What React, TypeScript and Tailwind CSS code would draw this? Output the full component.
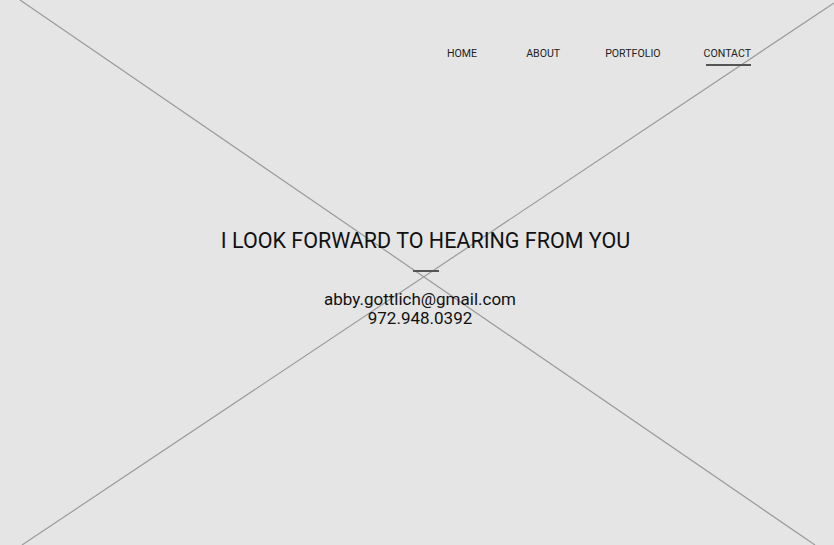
import React from "react";

const links = [
  { label: "HOME", gap: "" },
  { label: "ABOUT", gap: "ml-[49px]" },
  { label: "PORTFOLIO", gap: "ml-[45px]" },
  { label: "CONTACT", gap: "ml-[43px]", active: true },
];

function Backdrop() {
  return (
    <svg
      className="absolute inset-0 h-full w-full"
      viewBox="0 0 834 545"
      preserveAspectRatio="none"
    >
      <line x1="20" y1="0" x2="815" y2="545" stroke="#9a9a9a" strokeWidth="1.2" />
      <line x1="22" y1="545" x2="834" y2="3" stroke="#9a9a9a" strokeWidth="1.2" />
    </svg>
  );
}

export default function App() {
  return (
    <div
      className="relative h-[545px] w-[834px] overflow-hidden bg-[#e5e5e5] text-[#1a1a1a]"
      style={{ fontFamily: "Roboto, 'Liberation Sans', sans-serif" }}
    >
      <Backdrop />

      <nav className="relative flex justify-end pr-[83px] pt-[47px]">
        {links.map((l) => (
          <a
            key={l.label}
            className={`${l.gap} flex flex-col items-center text-[10.6px] leading-[14px] text-[#222]`}
          >
            {l.label}
            <span
              className={`mt-[3px] h-[2px] w-[calc(100%-2px)] self-end ${l.active ? "bg-[#555]" : "bg-transparent"}`}
            />
          </a>
        ))}
      </nav>

      <main className="relative mt-[162px] flex flex-col items-center">
        <h1 className="ml-[17px] text-[21.5px] leading-[25px] text-[#111]">
          I LOOK FORWARD TO HEARING FROM YOU
        </h1>
        <span className="ml-[17px] mt-[17px] h-[2px] w-[26px] bg-[#555]" />
        <div className="mt-[18px] ml-[6px] flex flex-col items-center text-[17px] leading-[19px] text-[#111]">
          <span>abby.gottlich@gmail.com</span>
          <span>972.948.0392</span>
        </div>
      </main>
    </div>
  );
}
